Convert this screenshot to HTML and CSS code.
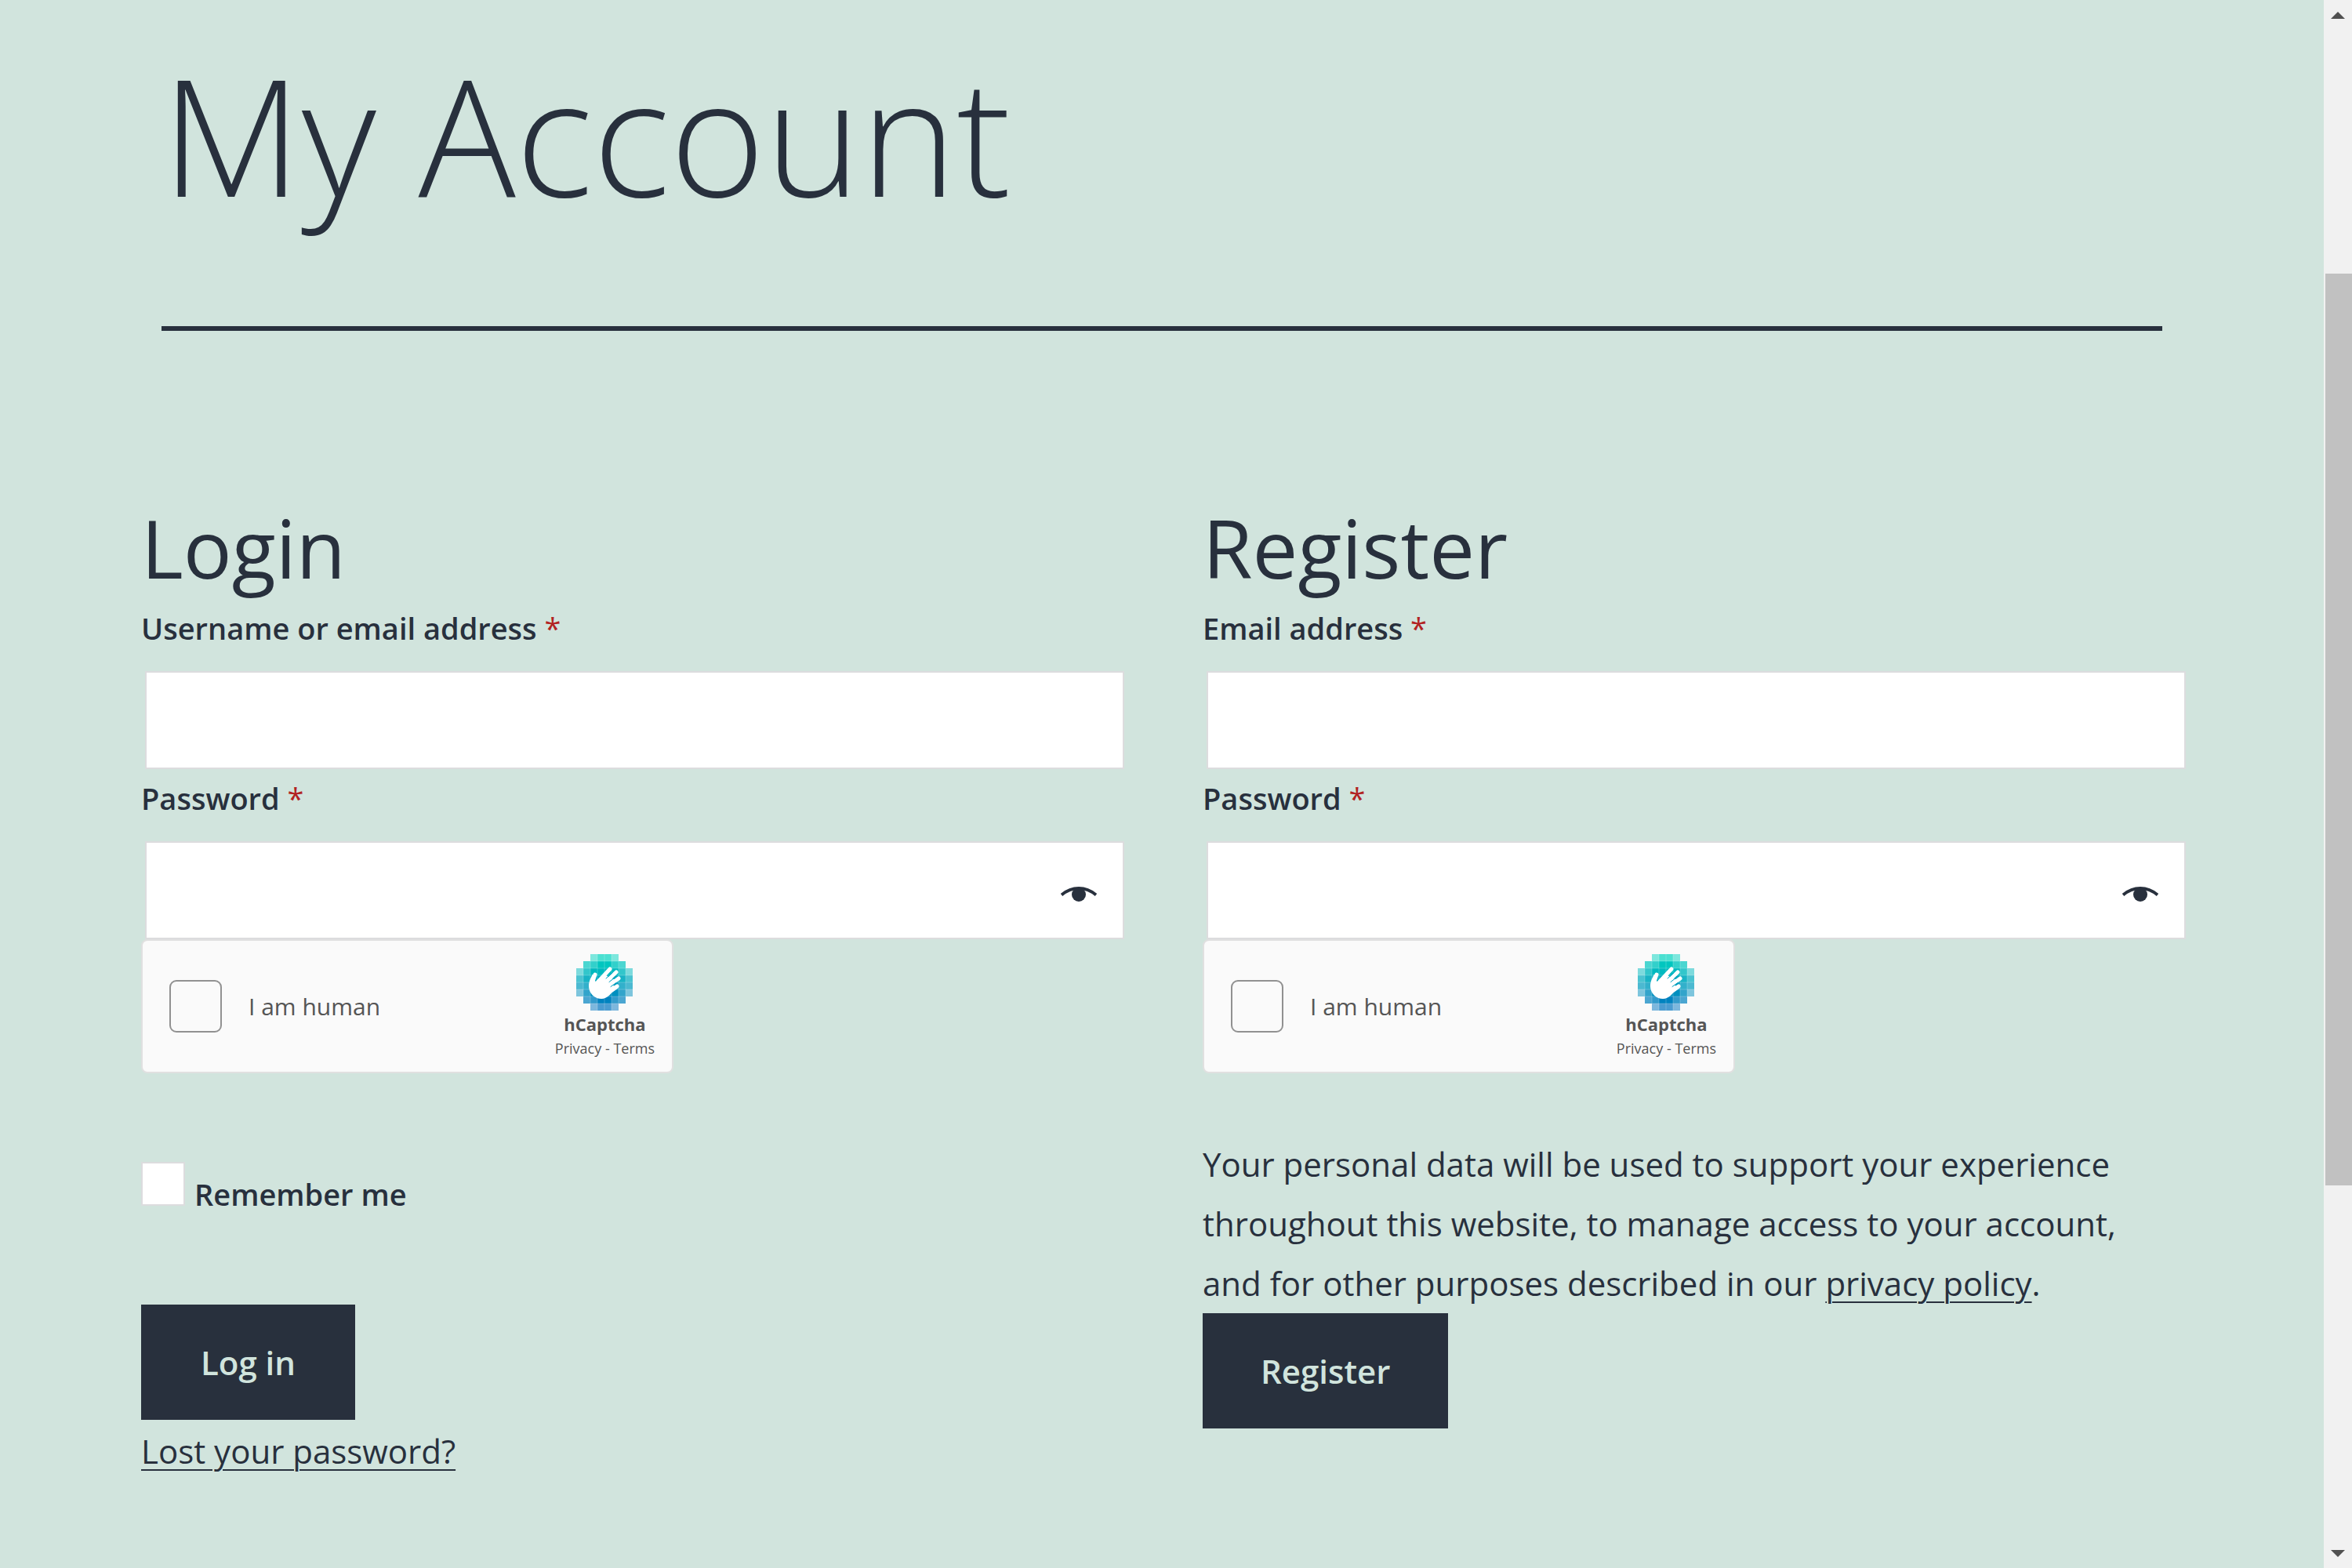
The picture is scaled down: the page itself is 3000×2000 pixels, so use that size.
FILE: index.html
```html
<!DOCTYPE html>
<html lang="en">
<head>
<meta charset="utf-8">
<title>My Account</title>
<link rel="stylesheet" href="styles.css">
</head>
<body>
<svg class="defs" aria-hidden="true">
  <symbol id="hcaptcha" viewBox="0 0 72 72">
    <g fill="#0074bf">
      <path opacity=".5" d="M18 63h9v9h-9zM45 63h9v9h-9z"/>
      <path opacity=".7" d="M27 63h9v9h-9zM36 63h9v9h-9z"/>
    </g>
    <g fill="#0082bf"><path opacity=".7" d="M9 54h9v9H9zM54 54h9v9h-9z"/><path opacity=".8" d="M18 54h9v9h-9zM45 54h9v9h-9z"/><path d="M27 54h18v9H27z"/></g>
    <g fill="#008fbf"><path opacity=".5" d="M0 45h9v9H0zM63 45h9v9h-9z"/><path opacity=".8" d="M9 45h9v9H9zM54 45h9v9h-9z"/><path d="M18 45h36v9H18z"/></g>
    <g fill="#009dbf"><path opacity=".7" d="M0 36h9v9H0zM63 36h9v9h-9z"/><path opacity=".8" d="M9 36h9v9H9zM54 36h9v9h-9z"/><path d="M18 36h36v9H18z"/></g>
    <g fill="#00abbf"><path opacity=".7" d="M0 27h9v9H0zM63 27h9v9h-9z"/><path opacity=".9" d="M9 27h9v9H9zM54 27h9v9h-9z"/><path d="M18 27h36v9H18z"/></g>
    <g fill="#00b9bf"><path opacity=".5" d="M0 18h9v9H0zM63 18h9v9h-9z"/><path opacity=".8" d="M9 18h9v9H9zM54 18h9v9h-9z"/><path d="M18 18h36v9H18z"/></g>
    <g fill="#00c6bf"><path opacity=".7" d="M9 9h9v9H9zM54 9h9v9h-9z"/><path opacity=".8" d="M18 9h9v9h-9zM45 9h9v9h-9z"/><path d="M27 9h18v9H27z"/></g>
    <g fill="#00d4bf"><path opacity=".5" d="M18 0h9v9h-9zM45 0h9v9h-9z"/><path opacity=".7" d="M27 0h18v9H27z"/></g>
    <path fill="none" stroke="#fff" stroke-opacity=".22" d="M18 9h36M9 18h54M0 27h72M0 36h72M0 45h72M9 54h54M18 63h36M9 18v36M18 9v54M27 0v72M36 0v72M45 0v72M54 9v54M63 18v36"/>
    <g fill="none" stroke="#fff" stroke-linecap="round" stroke-width="5">
      <path d="M24 26 20 38M43 19 28 35M51 23 34 39M54 31 38 43M52 41 40 49"/>
    </g>
    <path fill="#fff" d="M21 25.500c-2 4-5 9-5 15 0 9 7 16.500 16 16.500 6 0 10-4 13-7.500L54 43 47 40 52 33 44 31 38 27 28 33 24.500 35Z"/>
    <path fill="none" stroke="#00a0c0" stroke-linecap="round" stroke-width="1" d="m38 31 8-7M42 35.500l9-7M44 41.500l7-5"/>
  </symbol>
  <symbol id="eye" viewBox="0 0 46 20">
    <path fill="none" stroke="currentColor" stroke-width="4" d="M1 10.500Q11 2 23 2t22 8.500"/>
    <circle cx="23" cy="10" r="9" fill="currentColor"/>
  </symbol>
</svg>

<div class="viewport">
  <main class="page">
    <header class="page-header">
      <h1 class="page-title">My Account</h1>
    </header>

    <div class="columns">
      <section>
        <h2 class="form-title">Login</h2>
        <form>
          <div class="field">
            <label class="label" for="username">Username or email address <span class="required">*</span></label>
            <input class="input" id="username" type="text" autocomplete="username">
          </div>
          <div class="field">
            <label class="label" for="password">Password <span class="required">*</span></label>
            <div class="password">
              <input class="input" id="password" type="password" autocomplete="current-password">
              <button class="reveal" type="button" aria-label="Show password"><svg class="eye"><use href="#eye"/></svg></button>
            </div>
          </div>
          <div class="captcha">
            <input class="captcha-box" id="human-login" type="checkbox">
            <label class="captcha-label" for="human-login">I am human</label>
            <div class="captcha-brand">
              <svg class="captcha-logo" aria-hidden="true"><use href="#hcaptcha"/></svg>
              <span class="captcha-name">hCaptcha</span>
              <span class="captcha-links"><a href="#privacy">Privacy</a> - <a href="#terms">Terms</a></span>
            </div>
          </div>
          <div class="remember">
            <input class="checkbox" id="remember" type="checkbox">
            <label class="label" for="remember">Remember me</label>
          </div>
          <button class="button" type="submit">Log in</button>
          <p class="text"><a class="link" href="#lost-password">Lost your password?</a></p>
        </form>
      </section>

      <section>
        <h2 class="form-title">Register</h2>
        <form>
          <div class="field">
            <label class="label" for="reg-email">Email address <span class="required">*</span></label>
            <input class="input" id="reg-email" type="email" autocomplete="email">
          </div>
          <div class="field">
            <label class="label" for="reg-password">Password <span class="required">*</span></label>
            <div class="password">
              <input class="input" id="reg-password" type="password" autocomplete="new-password">
              <button class="reveal" type="button" aria-label="Show password"><svg class="eye"><use href="#eye"/></svg></button>
            </div>
          </div>
          <div class="captcha">
            <input class="captcha-box" id="human-register" type="checkbox">
            <label class="captcha-label" for="human-register">I am human</label>
            <div class="captcha-brand">
              <svg class="captcha-logo" aria-hidden="true"><use href="#hcaptcha"/></svg>
              <span class="captcha-name">hCaptcha</span>
              <span class="captcha-links"><a href="#privacy">Privacy</a> - <a href="#terms">Terms</a></span>
            </div>
          </div>
          <p class="text policy">Your personal data will be used to support your experience throughout this website, to manage access to your account, and for other purposes described in our <a class="link" href="#privacy-policy">privacy policy</a>.</p>
          <button class="button" type="submit">Register</button>
        </form>
      </section>
    </div>
  </main>

  <div class="scrollbar" aria-hidden="true">
    <svg class="arrow" viewBox="0 0 18 9"><path d="M9 0l9 9H0z"/></svg>
    <div class="track"><div class="thumb"></div></div>
    <svg class="arrow" viewBox="0 0 18 9"><path d="M0 0h18L9 9z"/></svg>
  </div>
</div>
</body>
</html>
```

FILE: styles.css
```css
* {
  box-sizing: border-box;
}

body {
  margin: 0;
  background: #d1e4dd;
  color: #28303d;
  font-family: "Segoe UI", "Open Sans", "Noto Sans", sans-serif;
  font-size: 42px;
  line-height: 76px;
}

h1,
h2,
p {
  margin: 0;
  font-weight: 400;
}

.defs {
  display: none;
}

.viewport {
  display: flex;
  height: 100vh;
  overflow: hidden;
}

.page {
  flex: 1;
  padding: 46px 176px 0 180px;
}

.page-header {
  margin: 0 30px 210px 26px;
  padding-bottom: 120px;
  border-bottom: 6px solid #28303d;
}

.page-title {
  font-size: 207px;
  font-weight: 300;
  line-height: 250px;
}

.columns {
  display: grid;
  grid-template-columns: 1fr 1fr;
  gap: 100px;
}

.form-title {
  font-size: 103px;
  line-height: 132px;
}

.field {
  display: flex;
  flex-direction: column;
  gap: 21px;
  padding-top: 3px;
}

.label {
  font-size: 38px;
  font-weight: 600;
  line-height: 68px;
}

.required {
  color: #b22222;
  font-weight: 400;
}

.field .input {
  height: 125px;
  margin-left: 5px;
  padding: 0 22px;
  border: 2px solid #dcdcde;
  border-radius: 0;
  background: #fff;
  color: inherit;
  font: inherit;
}

.password {
  position: relative;
  display: flex;
}

.password .input {
  flex: 1;
}

.reveal {
  position: absolute;
  inset: 0 0 0 auto;
  display: flex;
  align-items: center;
  padding: 10px 35px 0 24px;
  border: 0;
  background: none;
  color: inherit;
}

.eye {
  width: 46px;
  height: 20px;
}

.captcha {
  display: flex;
  align-items: center;
  width: 679px;
  height: 171px;
  padding: 0 22px 0 34px;
  border: 2px solid #e0e0e0;
  border-radius: 8px;
  background: #fafafa;
  color: #555;
}

.captcha-box {
  appearance: none;
  width: 67px;
  height: 67px;
  margin: 0 34px 0 0;
  border: 2px solid #919191;
  border-radius: 9px;
}

.captcha-label {
  flex: 1;
  font-size: 30px;
}

.captcha-brand {
  display: flex;
  flex-direction: column;
  align-items: center;
}

.captcha-logo {
  width: 72px;
  height: 72px;
}

.captcha-name {
  font-size: 22px;
  font-weight: 700;
  line-height: 34px;
}

.captcha-links {
  font-size: 18px;
  line-height: 28px;
}

.captcha-links a {
  color: inherit;
  text-decoration: none;
}

.remember {
  display: flex;
  align-items: baseline;
  gap: 12px;
  margin: 113px 0 107px;
}

.checkbox {
  appearance: none;
  width: 56px;
  height: 56px;
  margin: 0;
  border: 2px solid #dcdcde;
  background: #fff;
}

.button {
  display: block;
  min-width: 273px;
  height: 147px;
  padding: 0 74px;
  border: 0;
  background: #28303d;
  color: #d1e4dd;
  font: inherit;
  font-weight: 600;
}

.text {
  margin-top: 2px;
}

.policy {
  margin-top: 78px;
  padding-right: 50px;
}

.link {
  color: inherit;
  text-decoration-thickness: 2px;
  text-underline-offset: 7px;
}

.scrollbar {
  display: flex;
  flex-direction: column;
  align-items: center;
  gap: 15px;
  width: 36px;
  padding: 15px 0 14px;
  background: #f1f1f1;
}

.arrow {
  width: 18px;
  height: 9px;
  fill: #505050;
}

.track {
  flex: 1;
  align-self: stretch;
  display: flex;
  flex-direction: column;
  padding-left: 2px;
}

.track::before {
  content: "";
  flex: 310;
}

.thumb {
  flex: 1163;
  background: #c1c1c1;
}

.track::after {
  content: "";
  flex: 450;
}
```
